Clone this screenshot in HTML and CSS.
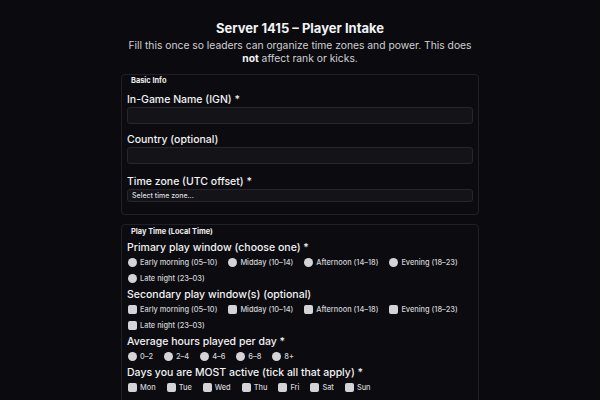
FILE: index.html
```html
<!DOCTYPE html>
<html lang="en">
<head>
<meta charset="utf-8">
<title>Server 1415 – Player Intake</title>
<link rel="stylesheet" href="styles.css">
</head>
<body>
<main class="page">
  <h1 class="title">Server 1415 – Player Intake</h1>
  <p class="intro">Fill this once so leaders can organize time zones and power. This does <strong>not</strong> affect rank or kicks.</p>

  <section class="card">
    <h2 class="card-title">Basic Info</h2>
    <div class="field">
      <label class="label">In-Game Name (IGN) *</label>
      <input class="text-input" type="text">
    </div>
    <div class="field">
      <label class="label">Country (optional)</label>
      <input class="text-input" type="text">
    </div>
    <div class="field field-select">
      <label class="label">Time zone (UTC offset) *</label>
      <div class="select">Select time zone...</div>
    </div>
  </section>

  <section class="card">
    <h2 class="card-title">Play Time (Local Time)</h2>
    <div class="group">
      <div class="label">Primary play window (choose one) *</div>
      <div class="options">
        <label class="opt"><input type="radio" name="p">Early morning (05–10)</label>
        <label class="opt"><input type="radio" name="p">Midday (10–14)</label>
        <label class="opt"><input type="radio" name="p">Afternoon (14–18)</label>
        <label class="opt"><input type="radio" name="p">Evening (18–23)</label>
        <label class="opt"><input type="radio" name="p">Late night (23–03)</label>
      </div>
    </div>
    <div class="group">
      <div class="label">Secondary play window(s) (optional)</div>
      <div class="options">
        <label class="opt"><input type="checkbox">Early morning (05–10)</label>
        <label class="opt"><input type="checkbox">Midday (10–14)</label>
        <label class="opt"><input type="checkbox">Afternoon (14–18)</label>
        <label class="opt"><input type="checkbox">Evening (18–23)</label>
        <label class="opt"><input type="checkbox">Late night (23–03)</label>
      </div>
    </div>
    <div class="group">
      <div class="label">Average hours played per day *</div>
      <div class="options">
        <label class="opt"><input type="radio" name="h">0–2</label>
        <label class="opt"><input type="radio" name="h">2–4</label>
        <label class="opt"><input type="radio" name="h">4–6</label>
        <label class="opt"><input type="radio" name="h">6–8</label>
        <label class="opt"><input type="radio" name="h">8+</label>
      </div>
    </div>
    <div class="group">
      <div class="label">Days you are MOST active (tick all that apply) *</div>
      <div class="options">
        <label class="opt"><input type="checkbox">Mon</label>
        <label class="opt"><input type="checkbox">Tue</label>
        <label class="opt"><input type="checkbox">Wed</label>
        <label class="opt"><input type="checkbox">Thu</label>
        <label class="opt"><input type="checkbox">Fri</label>
        <label class="opt"><input type="checkbox">Sat</label>
        <label class="opt"><input type="checkbox">Sun</label>
      </div>
    </div>
  </section>
</main>
</body>
</html>
```
FILE: styles.css
```css
html, body {
  margin: 0;
  padding: 0;
  background: #0b0b0f;
  color: #f2f2f4;
  font-family: Inter, "Liberation Sans", sans-serif;
}

.page {
  width: 358px;
  margin: 0 auto;
  padding-top: 19px;
}

.title {
  margin: 0;
  font-size: 13px;
  line-height: 18px;
  font-weight: 700;
  text-align: center;
}

.intro {
  margin: 2px 0 0;
  font-size: 10.3px;
  line-height: 13px;
  color: #cfcfd3;
  text-align: center;
}

.intro strong {
  color: #f2f2f4;
  font-weight: 700;
}

.card {
  margin-top: 9px;
  border: 1px solid #202026;
  border-radius: 4px;
  background: #0c0c10;
  padding: 0 5px 12px;
}

.card + .card {
  margin-top: 9px;
}

.card-title {
  margin: 0;
  padding: 1px 0 0 4px;
  font-size: 7.4px;
  line-height: 9px;
  font-weight: 700;
  color: #ececee;
}

.card + .card .card-title {
  padding-top: 2px;
}

.field {
  margin-top: 9px;
}

.card-title + .field {
  margin-top: 8px;
}

.field-select {
  margin-top: 11px;
}

.label {
  display: block;
  font-size: 10.5px;
  line-height: 14px;
  font-weight: 500;
  color: #f2f2f4;
}

.text-input {
  display: block;
  box-sizing: border-box;
  width: 100%;
  height: 17px;
  margin: 0;
  background: #141418;
  border: 1px solid #26262c;
  border-radius: 3px;
}

.select {
  box-sizing: border-box;
  height: 13px;
  padding-left: 4px;
  background: #141418;
  border: 1px solid #26262c;
  border-radius: 3px;
  font-size: 7px;
  line-height: 11px;
  font-weight: 500;
  color: #dcdce0;
}

.group {
  margin-top: 2px;
}

.card-title + .group {
  margin-top: 5px;
}

.options {
  display: flex;
  flex-wrap: wrap;
  column-gap: 10px;
  row-gap: 1px;
}

.opt {
  display: flex;
  align-items: center;
  height: 15px;
  font-size: 7.4px;
  font-weight: 500;
  color: #d2d2d6;
}

.opt input {
  appearance: none;
  -webkit-appearance: none;
  width: 9px;
  height: 9px;
  margin: 0 3px 0 1px;
  background: #d4d4d8;
  border: none;
}

.opt input[type="radio"] {
  border-radius: 50%;
}

.opt input[type="checkbox"] {
  border-radius: 2px;
}
```
